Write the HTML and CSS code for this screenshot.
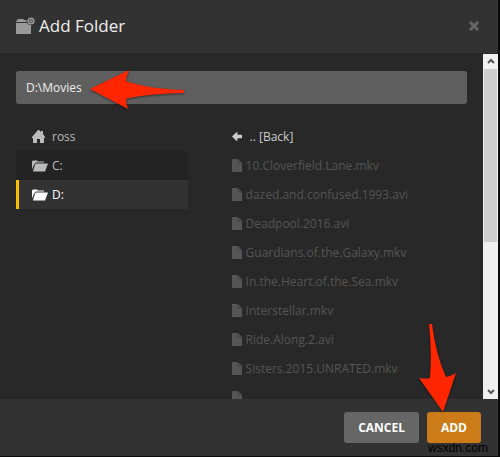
FILE: index.html
```html
<!DOCTYPE html>
<html lang="en">
<head>
    <meta charset="UTF-8">
    <meta name="viewport" content="width=device-width, initial-scale=1.0">
    <title>Add Folder</title>
    <link rel="stylesheet" href="styles.css">
</head>
<body>

    <!-- Shared icons -->
    <svg class="sprite" aria-hidden="true">
        <symbol id="icon-file" viewBox="0 0 10 13">
            <path d="M0 0h6l4 4v9H0z"/>
            <path d="M6 0v4h4" fill="none" stroke="#3c3c3c" stroke-width="0.8"/>
        </symbol>
        <symbol id="icon-folder" viewBox="0 0 16 12">
            <path d="M0 10V2l1-1h4l1 1h6v1H4L2 5z"/>
            <path d="M4 4h12l-3 8H1l2-7z"/>
        </symbol>
    </svg>

    <div class="modal" role="dialog" aria-labelledby="modal-title">
        <header class="modal-header">
            <svg class="title-icon" viewBox="0 0 19 18">
                <path d="M0 4h1V3l1-1h5l1 1h2l1 2H0z"/>
                <path d="M0 6h11l2 2h2v9H0z"/>
                <circle cx="15" cy="4" r="2.8" fill="none" stroke="#999" stroke-width="1.6"/>
                <path d="M14.4 2.4h1.2v3.2h-1.2zM13.4 3.4h3.2v1.2h-3.2z"/>
            </svg>
            <h1 class="modal-title" id="modal-title">Add Folder</h1>
            <button class="close" type="button" aria-label="Close">
                <svg viewBox="0 0 12 12"><path d="M2 2l8 8M10 2l-8 8"/></svg>
            </button>
        </header>

        <div class="modal-body">
            <div class="content">
                <input class="path-input" type="text" value="D:\Movies" aria-label="Folder path">

                <div class="browser">
                    <ul class="list drives">
                        <li><a href="#">
                            <svg class="icon icon-wide" viewBox="0 0 13 13" preserveAspectRatio="xMinYMid"><path d="M6 0h1l2 2V1h2v3l2 3v1h-1v5H8V9H5v4H1V8H0V7z"/></svg>
                            <span>ross</span></a></li>
                        <li class="hover"><a href="#"><svg class="icon icon-wide"><use href="#icon-folder"/></svg><span>C:</span></a></li>
                        <li class="active"><a href="#"><svg class="icon icon-wide"><use href="#icon-folder"/></svg><span>D:</span></a></li>
                    </ul>

                    <ul class="list files">
                        <li class="back"><a href="#">
                            <svg class="icon" viewBox="0 0 11 10"><path d="M0 5l5-5 1 1v2h5v4H6v2l-1 1z"/></svg>
                            <span>.. [Back]</span></a></li>
                        <li><svg class="icon"><use href="#icon-file"/></svg><span>10.Cloverfield.Lane.mkv</span></li>
                        <li><svg class="icon"><use href="#icon-file"/></svg><span>dazed.and.confused.1993.avi</span></li>
                        <li><svg class="icon"><use href="#icon-file"/></svg><span>Deadpool.2016.avi</span></li>
                        <li><svg class="icon"><use href="#icon-file"/></svg><span>Guardians.of.the.Galaxy.mkv</span></li>
                        <li><svg class="icon"><use href="#icon-file"/></svg><span>In.the.Heart.of.the.Sea.mkv</span></li>
                        <li><svg class="icon"><use href="#icon-file"/></svg><span>Interstellar.mkv</span></li>
                        <li><svg class="icon"><use href="#icon-file"/></svg><span>Ride.Along.2.avi</span></li>
                        <li><svg class="icon"><use href="#icon-file"/></svg><span>Sisters.2015.UNRATED.mkv</span></li>
                        <li><svg class="icon"><use href="#icon-file"/></svg></li>
                    </ul>
                </div>
            </div>

            <div class="scrollbar" aria-hidden="true">
                <svg class="scroll-arrow" viewBox="0 0 15 15"><path d="M5 9l3-3 3 3"/></svg>
                <div class="track"><div class="thumb"></div></div>
                <svg class="scroll-arrow" viewBox="0 0 15 15"><path d="M5 6l3 3 3-3"/></svg>
            </div>
        </div>

        <footer class="modal-footer">
            <button class="btn" type="button">CANCEL</button>
            <button class="btn btn-primary" type="button">ADD</button>
        </footer>

        <!-- Annotations -->
        <svg class="arrow arrow-path" viewBox="0 0 96 40">
            <path d="M0 19L39 0q-3 8-3 11 22 8 58 9v3q-40 1-58 6 0 4 2 10z"/>
        </svg>
        <svg class="arrow arrow-add" viewBox="0 0 38 90">
            <path d="M10 0h3q4 32 14 53 5-1 10-4L24 88 0 54q7 1 11 0 2-24-1-54z"/>
        </svg>
        <span class="watermark">wsxdn.com</span>
    </div>

</body>
</html>
```

FILE: styles.css
```css
* {
    margin: 0;
    padding: 0;
    box-sizing: border-box;
}

body {
    background: #0b0b0b;
    color: #bbb;
    font-family: "Open Sans", sans-serif;
    font-size: 12px;
}

.sprite {
    position: absolute;
    width: 0;
    height: 0;
}

/* Modal */
.modal {
    position: relative;
    display: flex;
    flex-direction: column;
    height: 100vh;
    background: #323232;
    border-right: 2px solid #0b0b0b;
    border-bottom: 1px solid #0b0b0b;
}

.modal-header {
    display: flex;
    align-items: center;
    gap: 4px;
    height: 53px;
    padding: 0 18px 2px 16px;
}

.title-icon {
    width: 19px;
    height: 18px;
    fill: #999;
}

.modal-title {
    flex: 1;
    color: #eee;
    font-size: 17px;
    font-weight: 400;
}

.close {
    width: 12px;
    height: 12px;
    border: 0;
    background: none;
}

.close svg {
    display: block;
    fill: none;
    stroke: #666;
    stroke-width: 3;
}

.modal-body {
    display: flex;
    flex: 1;
    min-height: 0;
    background: #282828;
}

.content {
    flex: 1;
    padding: 18px 16px 0;
    overflow: hidden;
}

.path-input {
    display: block;
    width: 100%;
    height: 33px;
    padding: 0 10px;
    border: 0;
    border-radius: 3px;
    background: #5f5f5f;
    color: #eee;
    font: inherit;
}

/* Folder browser */
.browser {
    display: grid;
    grid-template-columns: 172fr 236fr;
    gap: 44px;
    margin-top: 18px;
}

.list {
    list-style: none;
}

.list li {
    display: flex;
    align-items: center;
    gap: 4px;
    height: 29px;
    white-space: nowrap;
}

.list a {
    display: flex;
    align-items: center;
    gap: 4px;
    color: inherit;
    text-decoration: none;
}

.icon {
    width: 10px;
    height: 13px;
    fill: currentColor;
}

.icon-wide {
    width: 16px;
}

.drives li {
    padding-left: 13px;
    border-left: 3px solid transparent;
}

.drives .hover {
    background: #232323;
}

.drives .active {
    border-left-color: #f9be03;
    background: #323232;
    color: #fff;
}

.files {
    color: #555;
}

.files .back {
    color: #ccc;
}

.files .back a {
    gap: 8px;
}

/* Scrollbar */
.scrollbar {
    display: flex;
    flex-direction: column;
    width: 15px;
    margin-top: 1px;
    background: #f0f0f0;
}

.scroll-arrow {
    width: 15px;
    height: 15px;
    fill: none;
    stroke: #555;
    stroke-width: 2;
}

.track {
    flex: 1;
    padding: 0 1px;
}

.thumb {
    height: 55%;
    background: #cdcdcd;
}

/* Footer */
.modal-footer {
    display: flex;
    justify-content: flex-end;
    gap: 8px;
    padding: 13px 17px;
}

.btn {
    height: 31px;
    padding: 0 14px;
    border: 0;
    border-radius: 3px;
    background: #666;
    color: #fff;
    font-family: inherit;
    font-size: 12px;
    font-weight: 700;
}

.btn-primary {
    background: #cc7b19;
}

/* Annotations */
.arrow {
    position: absolute;
    fill: #ff2600;
    filter: drop-shadow(0 1px 1px rgba(0, 0, 0, 0.5));
    pointer-events: none;
}

.arrow-path {
    top: 70px;
    left: 90px;
    width: 96px;
    height: 40px;
}

.arrow-add {
    right: 41px;
    bottom: 42px;
    width: 38px;
    height: 90px;
}

.watermark {
    position: absolute;
    right: 10px;
    bottom: 1px;
    color: #000;
    font-family: "Liberation Sans", Arial, sans-serif;
    font-size: 12px;
}
```
